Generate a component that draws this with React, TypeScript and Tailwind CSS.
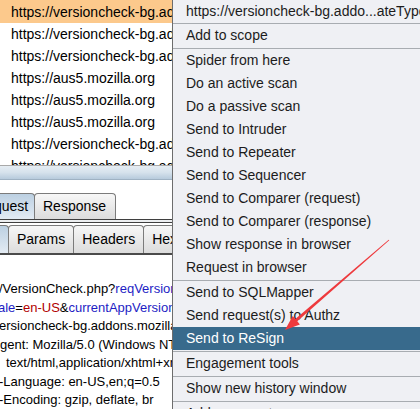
import React from "react";

const rows = [
  "https://versioncheck-bg.addons.mozilla.org",
  "https://versioncheck-bg.addons.mozilla.org",
  "https://versioncheck-bg.addons.mozilla.org",
  "https://aus5.mozilla.org",
  "https://aus5.mozilla.org",
  "https://aus5.mozilla.org",
  "https://versioncheck-bg.addons.mozilla.org",
  "https://versioncheck-bg.addons.mozilla.org",
];

type Item = { label: string; sep?: boolean; active?: boolean; first?: boolean };

const menu: Item[] = [
  { label: "https://versioncheck-bg.addo...ateType.php", first: true, sep: true },
  { label: "Add to scope", sep: true },
  { label: "Spider from here" },
  { label: "Do an active scan" },
  { label: "Do a passive scan" },
  { label: "Send to Intruder" },
  { label: "Send to Repeater" },
  { label: "Send to Sequencer" },
  { label: "Send to Comparer (request)" },
  { label: "Send to Comparer (response)" },
  { label: "Show response in browser" },
  { label: "Request in browser", sep: true },
  { label: "Send to SQLMapper" },
  { label: "Send request(s) to Authz" },
  { label: "Send to ReSign", active: true, sep: true },
  { label: "Engagement tools", sep: true },
  { label: "Show new history window", sep: true },
  { label: "Add comment" },
];

const tab =
  "h-full flex items-center pl-[8px] pr-[8px] border border-b-0 border-[#7b7b7b] rounded-t-[4px] bg-gradient-to-b from-[#f7f7f7] to-[#dcdcdc] text-black -ml-px";

export default function App() {
  return (
    <div className="relative w-[420px] h-[409px] overflow-hidden bg-white font-['Liberation_Sans',Arial,sans-serif] text-[14px]">
      {/* history list + request viewer */}
      <div className="flex flex-col w-[420px]">
        <div className="h-[165px] overflow-hidden">
          {rows.map((r, i) => (
            <div
              key={i}
              className={
                i === 0
                  ? "h-[23px] leading-[25px] pl-[11px] whitespace-nowrap bg-[#fcc98c] text-black"
                  : "h-[22px] leading-[22px] pl-[11px] whitespace-nowrap text-black"
              }
            >
              {r}
            </div>
          ))}
        </div>
        <div className="h-px bg-[#a9a9a9]" />
        <div className="h-[14px] bg-gradient-to-b from-[#e6edf3] via-[#d6e2ec] to-[#b7cbdc] border-b border-[#9fb2c3]" />

        {/* Request / Response tabs */}
        <div className="h-[39px] pt-[13px] flex items-end">
          <div className="h-[26px] flex">
            <div className="h-full w-[68px] -ml-[33px] flex items-center pl-[8px] border border-b-0 border-[#7b7b7b] rounded-t-[4px] bg-gradient-to-b from-[#bcd0e2] to-[#e3ebf3] text-black">
              Request
            </div>
            <div className="h-full w-[82px] flex items-center pl-[8px] border border-b-0 border-[#7b7b7b] rounded-t-[4px] bg-gradient-to-b from-[#f7f7f7] to-[#dcdcdc] -ml-px text-black">
              Response
            </div>
          </div>
        </div>
        <div className="h-[4px] border-y border-[#3f3f3f] bg-[#eceef0]" />

        {/* Raw / Params / Headers / Hex */}
        <div className="h-[32px] pt-[4px] flex items-end border-b-2 border-[#4a4a4a]">
          <div className="h-[28px] flex">
            <div className="h-full w-[9px] border-r border-t border-[#7b7b7b] rounded-tr-[4px] bg-gradient-to-b from-[#bcd0e2] to-[#e3ebf3]" />
            <div className={tab}>Params</div>
            <div className={tab}>Headers</div>
            <div className={tab + " w-[60px]"}>Hex</div>
          </div>
        </div>

        <div className="pt-[25px] text-[13px] leading-[18.5px] text-black whitespace-nowrap overflow-hidden">
          <div className="-ml-[1px]">
            /VersionCheck.php?<span className="text-[#1d1dc4]">reqVersion</span>=2&amp;id=
          </div>
          <div className="-ml-[2px]">
            <span className="text-[#1d1dc4]">ale</span>=<span className="text-[#b10000]">en-US</span>&amp;
            <span className="text-[#1d1dc4]">currentAppVersion</span>=<span className="text-[#b10000]">57.0</span>
          </div>
          <div className="-ml-[1px]">ersioncheck-bg.addons.mozilla.org</div>
          <div>gent: Mozilla/5.0 (Windows NT 10.0; Win64; x64)</div>
          <div className="ml-[6px]">text/html,application/xhtml+xml</div>
          <div className="-ml-[1px]">-Language: en-US,en;q=0.5</div>
          <div className="-ml-[1px]">-Encoding: gzip, deflate, br</div>
        </div>
      </div>

      {/* context menu */}
      <div className="absolute left-[172px] top-0 w-[260px] h-[420px] bg-[#eff0f4] border-l border-[#6d6d6d] text-[#1c1c1c]">
        {menu.map((m, i) => (
          <React.Fragment key={i}>
            <div
              className={
                (m.first ? "h-[22px] leading-[22px] " : "h-[23px] leading-[23px] ") +
                "pl-[13px] whitespace-nowrap overflow-hidden " +
                (m.active ? "bg-[#386a8c] text-white" : "")
              }
            >
              {m.label}
            </div>
            {m.sep && <div className="h-[2px] border-b border-[#a8acb1]" />}
          </React.Fragment>
        ))}
      </div>

      {/* annotation arrow */}
      <svg className="absolute inset-0 pointer-events-none" width="420" height="409" viewBox="0 0 420 409">
        <polygon
          points="389.3,240.3 297.3,321.3 299.9,324.4 285,330 292.7,316 295.3,319.1 388.7,239.7"
          fill="#ee3a3d"
        />
      </svg>
    </div>
  );
}
